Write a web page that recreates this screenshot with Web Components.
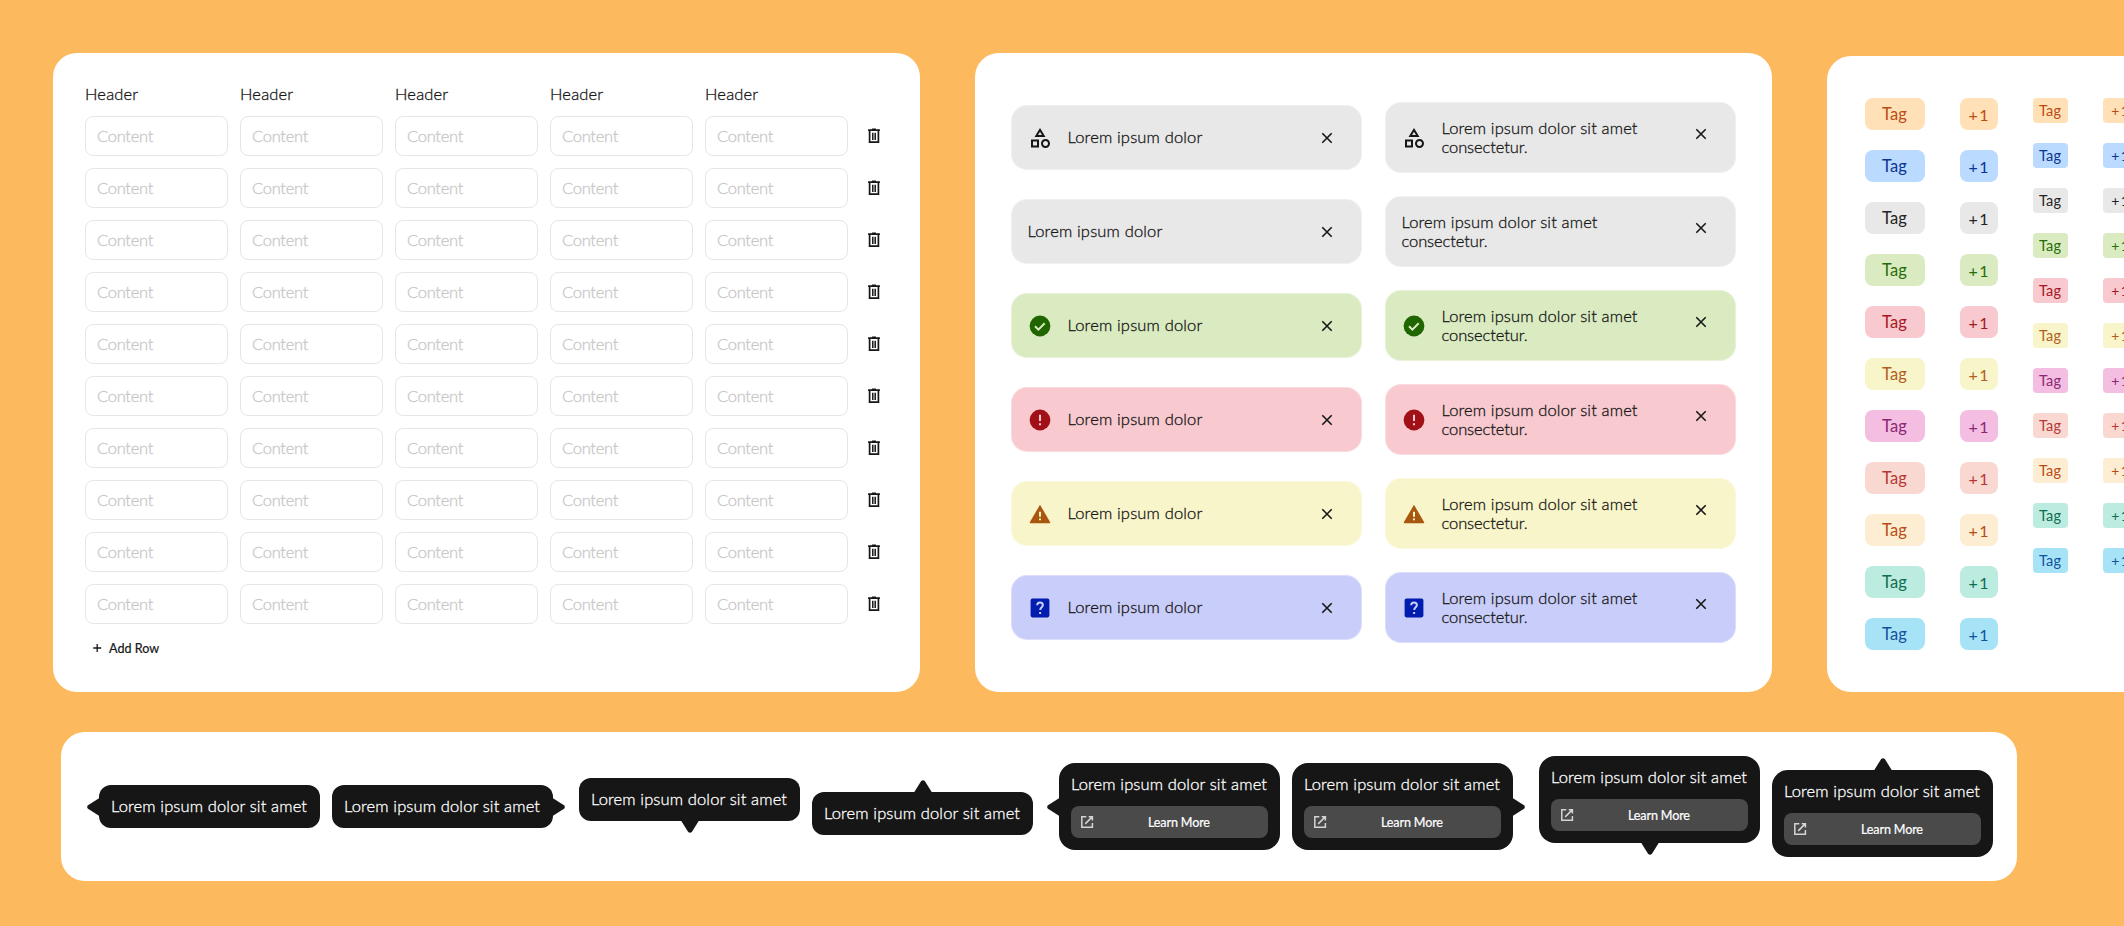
<!DOCTYPE html>
<html lang="en">
<head>
<meta charset="utf-8">
<title>Component sheet</title>
<style>
html{background:#fdb95e}
body{margin:0;width:2124px;height:926px;overflow:hidden;background:#fdb95e;font:300 16.5px/19px Lato,"Open Sans",sans-serif;color:#161616;-webkit-text-stroke:.3px}
</style>
</head>
<body>
<component-sheet></component-sheet>
<script>
const define = (name, css, html, ready) => customElements.define(name, class extends HTMLElement {
  connectedCallback() {
    if (this.shadowRoot) return;
    const root = this.attachShadow({ mode: "open" });
    const body = typeof html === "function" ? html(this) : html;
    root.innerHTML = `<style>*{box-sizing:border-box}${css}</style>${body}`;
    if (ready) ready(this, root);
  }
});

const ICONS = {
  shapes: `<path d="M12 2l-5.5 9h11L12 2zm0 3.84L13.93 9h-3.87L12 5.84zM17.5 13c-2.49 0-4.5 2.01-4.5 4.5s2.01 4.5 4.5 4.5 4.5-2.01 4.5-4.5-2.01-4.5-4.5-4.5zm0 7c-1.38 0-2.5-1.12-2.5-2.5s1.12-2.5 2.5-2.5 2.5 1.12 2.5 2.5-1.12 2.5-2.5 2.5zM3 21.5h8v-8H3v8zm2-6h4v4H5v-4z" fill="#161616"/>`,
  success: `<circle cx="12" cy="12" r="10.4" fill="#206500"/><path d="M7 12.2l3.4 3.4 6.3-6.3" fill="none" stroke="#daebc1" stroke-width="2"/>`,
  error: `<circle cx="12" cy="12" r="10.4" fill="#a11016"/><path d="M12 6.8v6.1M12 15.3v2" fill="none" stroke="#f8c9cf" stroke-width="2"/>`,
  warning: `<path d="M12 2.8L22.2 20.2Q22.5 21.2 21.4 21.2H2.6Q1.5 21.2 1.8 20.2Z" fill="#a9560f"/><path d="M12 9.8v5M12 16.4v1.9" fill="none" stroke="#f9f5ca" stroke-width="2"/>`,
  help: `<rect x="2.6" y="2.6" width="18.8" height="18.8" rx="1.8" fill="#001db0"/><path d="M9.2 9.3C9.2 7.5 10.4 6.5 12 6.5c1.7 0 2.9 1.1 2.9 2.6 0 2-2.7 2.4-2.7 4.9M12.1 16v2" fill="none" stroke="#c9cdf9" stroke-width="2"/>`,
  close: `<path d="M7.3 7.3l9.4 9.4M16.7 7.3l-9.4 9.4" fill="none" stroke="#161616" stroke-width="1.6"/>`,
  trash: `<path d="M6.1 6.2h11.8M10 5.3h4M7.6 6.5v11.7h8.8V6.5" fill="none" stroke="#161616" stroke-width="1.7"/><path d="M10.8 8.8v7.3M13.2 8.8v7.3" stroke="#161616" stroke-width="1.5"/>`,
  plus: `<path d="M12.2 8v8M8.2 12h8" stroke="#161616" stroke-width="1.3"/>`,
  open: `<path d="M11.3 6.7H6.8v10.6h10.6v-4.4M13.7 6.7h3.7v3.7M17.2 6.9l-7 7" fill="none" stroke="#d4d4d4" stroke-width="1.5"/>`
};
define("ui-icon", `:host{display:block;flex:none;width:24px;height:24px}svg{display:block}`,
  el => `<svg width="24" height="24" viewBox="0 0 24 24">${ICONS[el.getAttribute("name")]}</svg>`);

/* One line of text tracked so that its ink spans the "span" attribute in pixels. */
const pen = document.createElement("canvas").getContext("2d");
define("ui-text", `:host{display:block;white-space:nowrap}`, `<slot></slot>`, el => {
  const text = el.textContent, style = getComputedStyle(el);
  pen.font = `${style.fontWeight} ${style.fontSize} ${style.fontFamily}`;
  const m = pen.measureText(text);
  const word = +el.getAttribute("word") || 0;
  const gap = (+el.getAttribute("span") - word - m.actualBoundingBoxRight - m.actualBoundingBoxLeft) / (text.length - 1);
  if (word) el.style.wordSpacing = word + "px";
  el.style.letterSpacing = gap.toFixed(3) + "px";
  el.style.marginRight = (-gap).toFixed(3) + "px";
});

define("ui-card", `:host{display:flex;flex:none;box-sizing:border-box;background:#fff;border-radius:24px}`, `<slot></slot>`);

define("ui-field", `:host{display:flex;align-items:center;box-sizing:border-box;width:143px;height:40px;padding:0 0 0 11px;border:1px solid #e6e6e6;border-radius:8px;color:#c8c8c8}`,
  `<ui-text span="56.7">Content</ui-text>`);

define("ui-table", `:host{display:flex;flex-direction:column}
  .head,.row{display:grid;grid-template-columns:repeat(5,143px) 24px;column-gap:12px;align-items:center}
  .head{height:19px;margin-bottom:12px}.rows{display:grid;row-gap:12px}.row ui-icon{margin-left:2px}
  .add{display:flex;align-items:center;height:24px;margin-top:12px;font-size:12.6px;font-weight:400;-webkit-text-stroke:.2px}`,
  `<div class="head">${`<ui-text span="52.3">Header</ui-text>`.repeat(5)}</div>
   <div class="rows">${`<div class="row">${"<ui-field></ui-field>".repeat(5)}<ui-icon name="trash"></ui-icon></div>`.repeat(10)}</div>
   <div class="add"><ui-icon name="plus"></ui-icon><ui-text span="50.3">Add Row</ui-text></div>`);

define("ui-alert", `:host{display:flex;align-items:center;box-sizing:border-box;width:350.5px;height:64.5px;padding:0 15px 0 15.5px;border-radius:16px;background:var(--tone);border:1px solid rgba(255,255,255,.35)}
  :host([long]){height:70.5px}ui-icon{margin-right:16px}.copy{flex:1}
  .close{margin:0 6.5px 0 0}:host([long]) .close{margin-bottom:7px}`,
  el => {
    const kind = el.getAttribute("kind"), long = el.hasAttribute("long");
    return (kind ? `<ui-icon name="${kind}"></ui-icon>` : "") +
      `<div class="copy">${long ? `<ui-text span="195.7">Lorem ipsum dolor sit amet</ui-text><ui-text span="85.3">consectetur.</ui-text>` : `<ui-text span="134">Lorem ipsum dolor</ui-text>`}</div><ui-icon class="close" name="close"></ui-icon>`;
  });

define("ui-alerts", `:host{display:grid;grid-template-columns:350.5px 350.5px;grid-auto-rows:94px;column-gap:23.5px;align-items:center}`,
  [["shapes", "#e8e8e8"], ["", "#e8e8e8"], ["success", "#daebc1"], ["error", "#f8c9cf"], ["warning", "#f9f5ca"], ["help", "#c9cdf9"]]
    .map(([k, c]) => `<ui-alert kind="${k}" style="--tone:${c}"></ui-alert><ui-alert long kind="${k}" style="--tone:${c}"></ui-alert>`).join(""));

define("ui-tag", `:host{display:flex;align-items:center;justify-content:center;box-sizing:border-box;width:60px;height:32px;border-radius:8px;padding:0 1px 0 0;background:var(--tone);color:var(--ink);font-size:16.5px;font-weight:400;-webkit-text-stroke:0}
  :host([count]){width:38px;font-size:16px}:host([small]){width:35px;height:25px;border-radius:4px;font-size:14.5px}:host([small][count]){font-size:14px}`,
  el => {
    const small = el.hasAttribute("small");
    return el.hasAttribute("count") ? `<ui-text word="5" span="${small ? 17.4 : 19.8}">+ 1</ui-text>` : `<ui-text span="${small ? 22.6 : 25.3}">Tag</ui-text>`;
  });

define("ui-tags", `:host{display:flex;align-items:flex-start;gap:35px}div{display:grid;row-gap:20px}`,
  () => {
    const tones = [["#ffe0b7", "#bb4c12"], ["#badaff", "#0c3590"], ["#e8e8e8", "#242424"], ["#daebc1", "#276b08"], ["#f8c9cf", "#a6181f"], ["#f9f5ca", "#af601c"], ["#f3bee1", "#8d2774"], ["#fad8d2", "#b53832"], ["#fdedd2", "#b84d14"], ["#bcebdf", "#0e6e50"], ["#a7e3f7", "#12529c"]];
    const col = attrs => `<div>${tones.map(([a, b]) => `<ui-tag ${attrs} style="--tone:${a};--ink:${b}"></ui-tag>`).join("")}</div>`;
    return col("") + col("count") + col("small") + col("small count");
  });

define("ui-tooltip", `:host{display:flex;flex:none;align-items:center;color:#fff}
  :host([side=bottom]){flex-direction:column;padding-bottom:2px}:host([side=top]){flex-direction:column-reverse;padding-top:2px}:host([side=left]){flex-direction:row-reverse}
  .box{width:221px;height:43px;border-radius:12px;background:#161616;padding:11.5px 12px 12px;display:flex;flex-direction:column;justify-content:space-between}
  :host([action]) .box{height:87px;border-radius:16px}
  .tip{display:block;flex:none;width:12px;height:18px}:host([side=bottom]) .tip,:host([side=top]) .tip{width:18px;height:12px}
  .btn{display:grid;grid-template-columns:24px 1fr;align-items:center;width:197px;height:32px;background:#4a4a4a;border-radius:8px;padding-left:4px;font-size:12.6px;font-weight:400;-webkit-text-stroke:.2px}
  .btn ui-text{justify-self:center;margin-left:-9px}`,
  el => {
    const tips = {
      left: ["12 18", "M12 .3L1 7.2Q-.6 9 1 10.8L12 17.7Z"], right: ["12 18", "M0 .3L11 7.2Q12.6 9 11 10.8L0 17.7Z"],
      bottom: ["18 12", "M.3 0L7.2 11Q9 12.6 10.8 11L17.7 0Z"], top: ["18 12", "M.3 12L7.2 1Q9-.6 10.8 1L17.7 12Z"]
    };
    const [box, d] = tips[el.getAttribute("side")];
    return `<div class="box"><ui-text span="195.7">Lorem ipsum dolor sit amet</ui-text>${el.hasAttribute("action") ? `<div class="btn"><ui-icon name="open"></ui-icon><ui-text span="61.3">Learn More</ui-text></div>` : ""}</div>
      <svg class="tip" viewBox="0 0 ${box}"><path d="${d}" fill="#161616"/></svg>`;
  });

define("ui-tooltips", `:host{display:flex;align-items:center;gap:14px}.pair{display:flex;align-items:center;gap:12px}`,
  ["", "action"].map(a => `<div class="pair"><ui-tooltip side="left" ${a}></ui-tooltip><ui-tooltip side="right" ${a}></ui-tooltip></div><div class="pair"><ui-tooltip side="bottom" ${a}></ui-tooltip><ui-tooltip side="top" ${a}></ui-tooltip></div>`).join(""));

define("component-sheet", `:host{display:flex;flex-direction:column;gap:40px;padding:53px 0 0 53px}
  .top{display:flex;gap:55px}
  .table{width:867px;height:639px;padding:32px}
  .alerts{width:797px;height:639px;padding:37.5px 0 0 36px}
  .tags{width:297px;height:636px;margin-top:3px;padding:42px 0 0 38px;border-radius:24px 0 0 24px;overflow:hidden}
  .tips{width:1956px;height:149px;margin-left:8px;padding:0 24px 0 26px;align-items:center}`,
  `<div class="top"><ui-card class="table"><ui-table></ui-table></ui-card><ui-card class="alerts"><ui-alerts></ui-alerts></ui-card><ui-card class="tags"><ui-tags></ui-tags></ui-card></div>
   <ui-card class="tips"><ui-tooltips></ui-tooltips></ui-card>`);
</script>
</body>
</html>
